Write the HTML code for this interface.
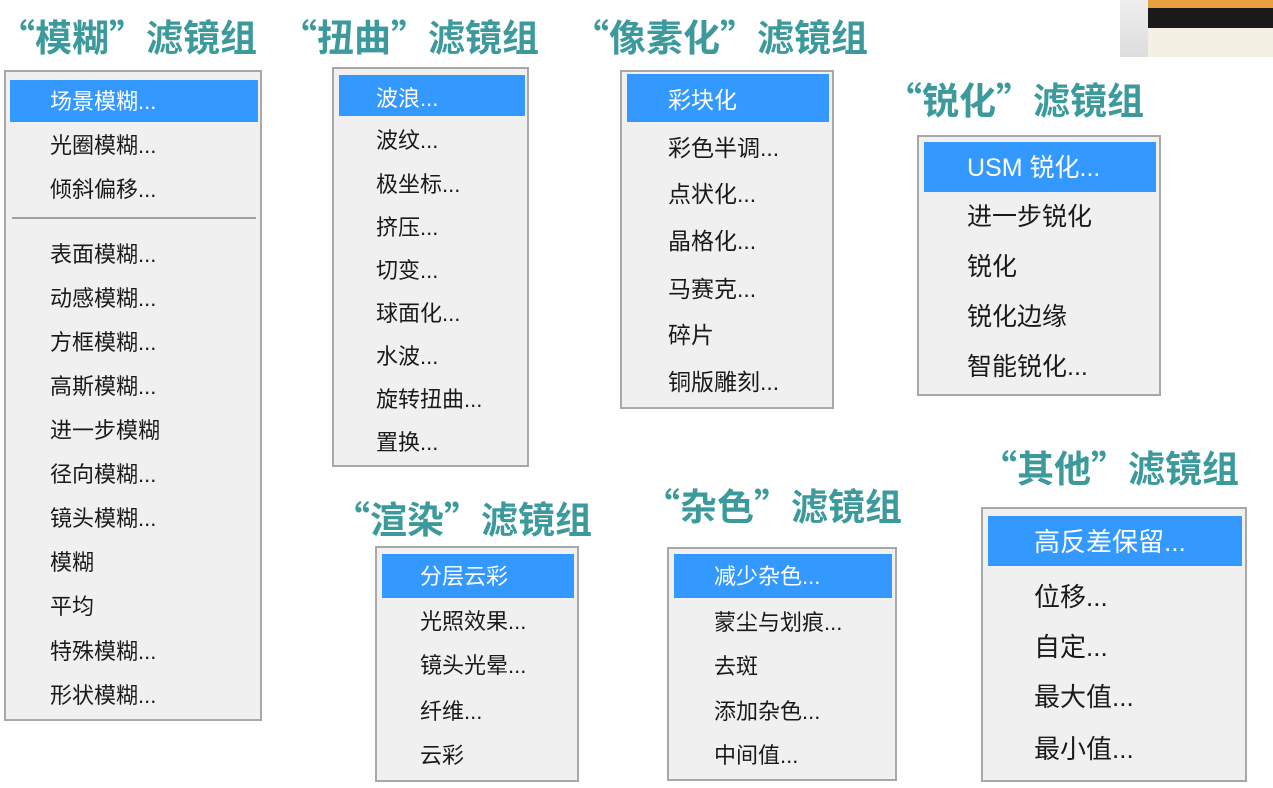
<!DOCTYPE html>
<html><head><meta charset="utf-8"><style>
body{margin:0;width:1273px;height:788px;background:#fff;position:relative;overflow:hidden;font-family:"Liberation Sans","Noto Sans CJK SC",sans-serif;}
.t{position:absolute;color:#3d9a9c;font-weight:bold;font-size:37px;white-space:nowrap;line-height:40px;font-family:"Noto Sans CJK SC",sans-serif;transform:translate(-20px,-2px);}
.m{position:absolute;background:#f0f0f0;border:2px solid #a8a8a8;box-sizing:border-box;}
.i{position:absolute;left:0;right:0;color:#1a1a1a;white-space:nowrap;transform:translateY(-4px);}
.h{position:absolute;background:#3399ff;}
.s{position:absolute;height:2px;background:#a0a0a0;}
</style></head><body>
<div style="position:absolute;left:1120px;top:0;width:153px;height:57px;background:linear-gradient(#eee,#ddd);"></div>
<div style="position:absolute;left:1148px;top:0;width:125px;height:15px;background:#e8a040;"></div>
<div style="position:absolute;left:1148px;top:8px;width:125px;height:20px;background:#1a1a1a;"></div>
<div style="position:absolute;left:1148px;top:28px;width:125px;height:29px;background:#f4f0e4;"></div>

<div class="t" style="left:18px;top:17px">“模糊”滤镜组</div>
<div class="t" style="left:300px;top:17px">“扭曲”滤镜组</div>
<div class="t" style="left:592px;top:17px">“像素化”滤镜组</div>
<div class="t" style="left:905px;top:80px">“锐化”滤镜组</div>
<div class="t" style="left:353px;top:499px">“渲染”滤镜组</div>
<div class="t" style="left:663px;top:486px">“杂色”滤镜组</div>
<div class="t" style="left:1000px;top:448px">“其他”滤镜组</div>

<!-- blur -->
<div class="m" style="left:4px;top:70px;width:258px;height:651px;font-size:22px">
<div class="h" style="left:4px;top:8px;width:248px;height:42px"></div>
<div class="s" style="left:6px;top:145px;width:244px"></div>
<div class="i" style="left:44px;top:16px;color:#fff">场景模糊...</div>
<div class="i" style="left:44px;top:60px">光圈模糊...</div>
<div class="i" style="left:44px;top:104px">倾斜偏移...</div>
<div class="i" style="left:44px;top:169px">表面模糊...</div>
<div class="i" style="left:44px;top:213px">动感模糊...</div>
<div class="i" style="left:44px;top:257px">方框模糊...</div>
<div class="i" style="left:44px;top:301px">高斯模糊...</div>
<div class="i" style="left:44px;top:345px">进一步模糊</div>
<div class="i" style="left:44px;top:389px">径向模糊...</div>
<div class="i" style="left:44px;top:433px">镜头模糊...</div>
<div class="i" style="left:44px;top:477px">模糊</div>
<div class="i" style="left:44px;top:521px">平均</div>
<div class="i" style="left:44px;top:566px">特殊模糊...</div>
<div class="i" style="left:44px;top:610px">形状模糊...</div>
</div>

<!-- distort -->
<div class="m" style="left:332px;top:67px;width:197px;height:400px;font-size:22px">
<div class="h" style="left:5px;top:6px;width:186px;height:41px"></div>
<div class="i" style="left:42px;top:16px;color:#fff">波浪...</div>
<div class="i" style="left:42px;top:58px">波纹...</div>
<div class="i" style="left:42px;top:102px">极坐标...</div>
<div class="i" style="left:42px;top:145px">挤压...</div>
<div class="i" style="left:42px;top:188px">切变...</div>
<div class="i" style="left:42px;top:231px">球面化...</div>
<div class="i" style="left:42px;top:274px">水波...</div>
<div class="i" style="left:42px;top:317px">旋转扭曲...</div>
<div class="i" style="left:42px;top:360px">置换...</div>
</div>

<!-- pixelate -->
<div class="m" style="left:620px;top:70px;width:214px;height:339px;font-size:23px">
<div class="h" style="left:5px;top:2px;width:202px;height:48px"></div>
<div class="i" style="left:46px;top:13px;color:#fff">彩块化</div>
<div class="i" style="left:46px;top:61px">彩色半调...</div>
<div class="i" style="left:46px;top:107px">点状化...</div>
<div class="i" style="left:46px;top:154px">晶格化...</div>
<div class="i" style="left:46px;top:202px">马赛克...</div>
<div class="i" style="left:46px;top:248px">碎片</div>
<div class="i" style="left:46px;top:295px">铜版雕刻...</div>
</div>

<!-- sharpen -->
<div class="m" style="left:917px;top:135px;width:244px;height:261px;font-size:25px">
<div class="h" style="left:5px;top:5px;width:232px;height:50px"></div>
<div class="i" style="left:48px;top:15px;color:#fff">USM 锐化...</div>
<div class="i" style="left:48px;top:64px">进一步锐化</div>
<div class="i" style="left:48px;top:114px">锐化</div>
<div class="i" style="left:48px;top:164px">锐化边缘</div>
<div class="i" style="left:48px;top:214px">智能锐化...</div>
</div>

<!-- render -->
<div class="m" style="left:375px;top:546px;width:204px;height:236px;font-size:22px">
<div class="h" style="left:5px;top:6px;width:192px;height:44px"></div>
<div class="i" style="left:43px;top:15px;color:#fff">分层云彩</div>
<div class="i" style="left:43px;top:60px">光照效果...</div>
<div class="i" style="left:43px;top:104px">镜头光晕...</div>
<div class="i" style="left:43px;top:150px">纤维...</div>
<div class="i" style="left:43px;top:194px">云彩</div>
</div>

<!-- noise -->
<div class="m" style="left:667px;top:547px;width:230px;height:234px;font-size:22px">
<div class="h" style="left:5px;top:5px;width:218px;height:44px"></div>
<div class="i" style="left:45px;top:14px;color:#fff">减少杂色...</div>
<div class="i" style="left:45px;top:60px">蒙尘与划痕...</div>
<div class="i" style="left:45px;top:104px">去斑</div>
<div class="i" style="left:45px;top:149px">添加杂色...</div>
<div class="i" style="left:45px;top:193px">中间值...</div>
</div>

<!-- other -->
<div class="m" style="left:981px;top:507px;width:266px;height:275px;font-size:26px">
<div class="h" style="left:5px;top:7px;width:254px;height:50px"></div>
<div class="i" style="left:51px;top:17px;color:#fff">高反差保留...</div>
<div class="i" style="left:51px;top:72px">位移...</div>
<div class="i" style="left:51px;top:122px">自定...</div>
<div class="i" style="left:51px;top:172px">最大值...</div>
<div class="i" style="left:51px;top:224px">最小值...</div>
</div>
</body></html>
